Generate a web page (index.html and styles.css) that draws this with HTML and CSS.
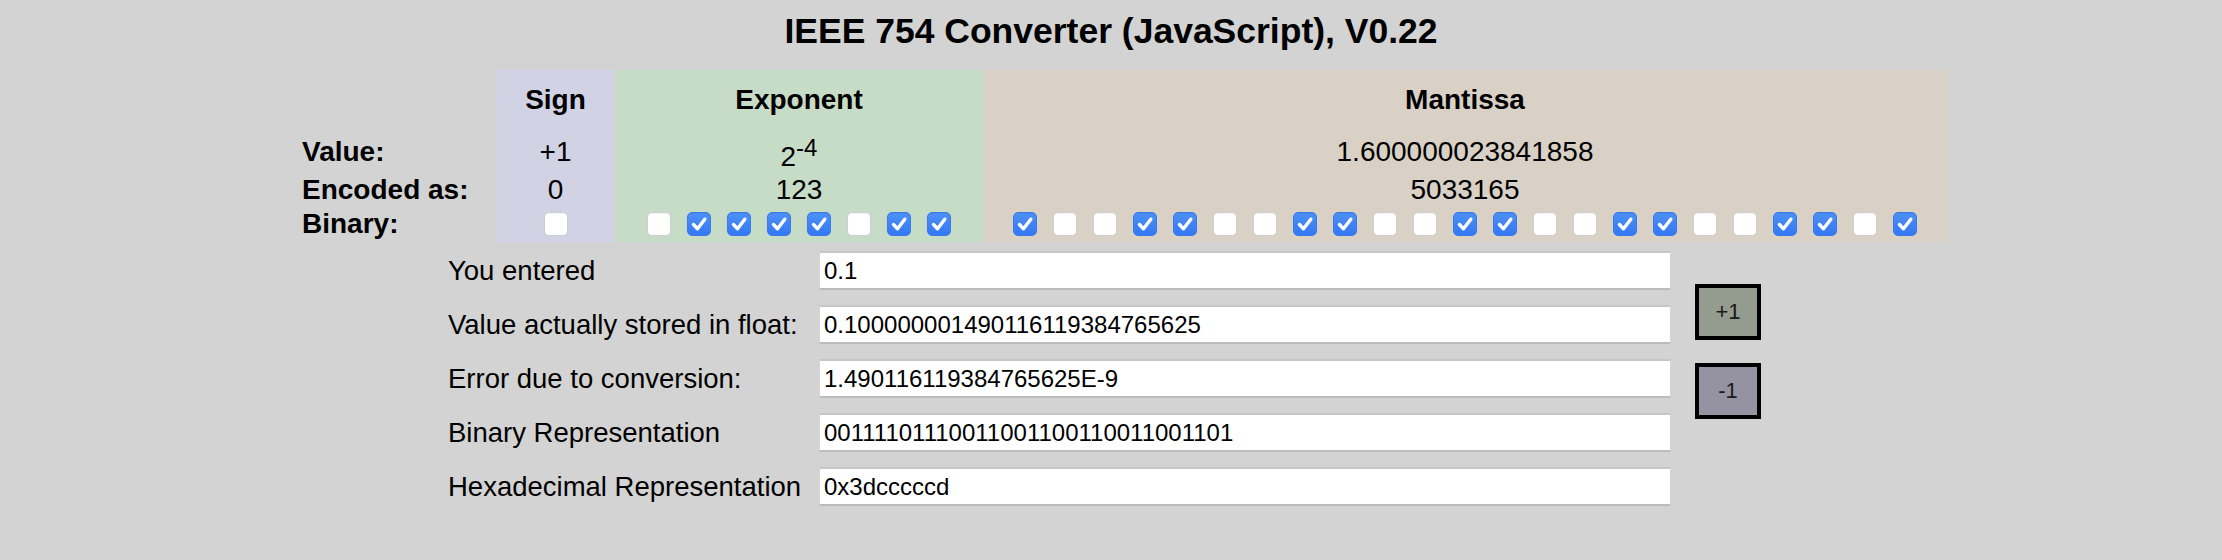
FILE: index.html
```html
<!DOCTYPE html>
<html>
<head>
<meta charset="utf-8">
<title>IEEE 754 Converter</title>
<link rel="stylesheet" href="styles.css">
</head>
<body>
<h1 class="title">IEEE 754 Converter (JavaScript), V0.22</h1>
<div class="bits">
  <div class="cell lab"></div>
  <div class="cell sign head">Sign</div>
  <div class="cell exp head">Exponent</div>
  <div class="cell man head">Mantissa</div>

  <div class="cell lab">Value:</div>
  <div class="cell sign">+1</div>
  <div class="cell exp pow"><span>2<sup>-4</sup></span></div>
  <div class="cell man">1.600000023841858</div>

  <div class="cell lab">Encoded as:</div>
  <div class="cell sign">0</div>
  <div class="cell exp">123</div>
  <div class="cell man">5033165</div>

  <div class="cell lab">Binary:</div>
  <div class="cell sign boxes">
    <span class="cb"></span>
  </div>
  <div class="cell exp boxes">
    <span class="cb"></span>
    <span class="cb on"><svg viewBox="0 0 24 24"><path d="M6.5 12.5 L10.5 16.8 L17.8 7.2"/></svg></span>
    <span class="cb on"><svg viewBox="0 0 24 24"><path d="M6.5 12.5 L10.5 16.8 L17.8 7.2"/></svg></span>
    <span class="cb on"><svg viewBox="0 0 24 24"><path d="M6.5 12.5 L10.5 16.8 L17.8 7.2"/></svg></span>
    <span class="cb on"><svg viewBox="0 0 24 24"><path d="M6.5 12.5 L10.5 16.8 L17.8 7.2"/></svg></span>
    <span class="cb"></span>
    <span class="cb on"><svg viewBox="0 0 24 24"><path d="M6.5 12.5 L10.5 16.8 L17.8 7.2"/></svg></span>
    <span class="cb on"><svg viewBox="0 0 24 24"><path d="M6.5 12.5 L10.5 16.8 L17.8 7.2"/></svg></span>
  </div>
  <div class="cell man boxes">
    <span class="cb on"><svg viewBox="0 0 24 24"><path d="M6.5 12.5 L10.5 16.8 L17.8 7.2"/></svg></span>
    <span class="cb"></span>
    <span class="cb"></span>
    <span class="cb on"><svg viewBox="0 0 24 24"><path d="M6.5 12.5 L10.5 16.8 L17.8 7.2"/></svg></span>
    <span class="cb on"><svg viewBox="0 0 24 24"><path d="M6.5 12.5 L10.5 16.8 L17.8 7.2"/></svg></span>
    <span class="cb"></span>
    <span class="cb"></span>
    <span class="cb on"><svg viewBox="0 0 24 24"><path d="M6.5 12.5 L10.5 16.8 L17.8 7.2"/></svg></span>
    <span class="cb on"><svg viewBox="0 0 24 24"><path d="M6.5 12.5 L10.5 16.8 L17.8 7.2"/></svg></span>
    <span class="cb"></span>
    <span class="cb"></span>
    <span class="cb on"><svg viewBox="0 0 24 24"><path d="M6.5 12.5 L10.5 16.8 L17.8 7.2"/></svg></span>
    <span class="cb on"><svg viewBox="0 0 24 24"><path d="M6.5 12.5 L10.5 16.8 L17.8 7.2"/></svg></span>
    <span class="cb"></span>
    <span class="cb"></span>
    <span class="cb on"><svg viewBox="0 0 24 24"><path d="M6.5 12.5 L10.5 16.8 L17.8 7.2"/></svg></span>
    <span class="cb on"><svg viewBox="0 0 24 24"><path d="M6.5 12.5 L10.5 16.8 L17.8 7.2"/></svg></span>
    <span class="cb"></span>
    <span class="cb"></span>
    <span class="cb on"><svg viewBox="0 0 24 24"><path d="M6.5 12.5 L10.5 16.8 L17.8 7.2"/></svg></span>
    <span class="cb on"><svg viewBox="0 0 24 24"><path d="M6.5 12.5 L10.5 16.8 L17.8 7.2"/></svg></span>
    <span class="cb"></span>
    <span class="cb on"><svg viewBox="0 0 24 24"><path d="M6.5 12.5 L10.5 16.8 L17.8 7.2"/></svg></span>
  </div>
</div>

<div class="form">
  <div class="fields">
    <div class="row"><label class="flabel">You entered</label><input class="field" type="text" value="0.1"></div>
    <div class="row"><label class="flabel">Value actually stored in float:</label><input class="field" type="text" value="0.100000001490116119384765625"></div>
    <div class="row"><label class="flabel">Error due to conversion:</label><input class="field" type="text" value="1.490116119384765625E-9"></div>
    <div class="row"><label class="flabel">Binary Representation</label><input class="field" type="text" value="00111101110011001100110011001101"></div>
    <div class="row"><label class="flabel">Hexadecimal Representation</label><input class="field" type="text" value="0x3dcccccd"></div>
  </div>
  <div class="btns">
    <button class="btn plus" type="button">+1</button>
    <button class="btn minus" type="button">-1</button>
  </div>
</div>
</body>
</html>
```

FILE: styles.css
```css
html, body {
  margin: 0;
  padding: 0;
  background: #d3d3d3;
  font-family: "Liberation Sans", Arial, Helvetica, sans-serif;
  color: #000;
}

.title {
  margin: 11px 0 0;
  font-size: 35.5px;
  line-height: 40px;
  font-weight: bold;
  text-align: center;
}

.bits {
  display: grid;
  grid-template-columns: 194px 119px 368px 964px;
  grid-template-rows: 60px 44px 32px 36px;
  margin: 19px 0 0 302px;
  width: max-content;
  font-size: 28px;
  line-height: 32px;
}

.cell {
  display: flex;
  align-items: center;
  justify-content: center;
  white-space: nowrap;
}

.cell.lab {
  justify-content: flex-start;
  font-weight: bold;
}

.cell.head {
  font-weight: bold;
}

.sign { background: #d1d2e4; }
.exp  { background: #c6dcc6; }
.man  { background: #d9d0c6; }

.pow {
  padding-top: 10px;
}

.pow sup {
  font-size: 24px;
  line-height: 0;
}

.boxes {
  gap: 16px;
}

.cb {
  box-sizing: border-box;
  width: 24px;
  height: 24px;
  border-radius: 5px;
  background: #fff;
  border: 1px solid #cfcfcf;
  box-shadow: inset 0 1px 1px rgba(0,0,0,0.04);
  display: flex;
  align-items: center;
  justify-content: center;
}

.cb.on {
  background: linear-gradient(#4c91f7, #3478f6);
  border: 1px solid #3a7ae8;
}

.cb svg {
  width: 24px;
  height: 24px;
  flex: none;
  fill: none;
  stroke: #fff;
  stroke-width: 3.4;
  stroke-linecap: round;
  stroke-linejoin: round;
}

.form {
  display: flex;
  gap: 24px;
  margin: 9px 0 0 448px;
}

.fields {
  display: flex;
  flex-direction: column;
  gap: 15px;
}

.row {
  display: flex;
  align-items: center;
  height: 39px;
}

.flabel {
  width: 371px;
  font-size: 27.5px;
  line-height: 32px;
  white-space: nowrap;
}

.field {
  box-sizing: border-box;
  width: 852px;
  height: 39px;
  margin: 0;
  padding: 0 4px;
  font-family: "Liberation Sans", Arial, Helvetica, sans-serif;
  font-size: 24px;
  color: #000;
  background: #fff;
  border: 1px solid #d6d6d6;
  border-top: 2px solid #c6c6c6;
  border-bottom: 2px solid #bcbcbc;
  outline: none;
}

.btns {
  display: flex;
  flex-direction: column;
  gap: 23px;
  padding-top: 33px;
}

.btn {
  box-sizing: border-box;
  width: 66px;
  height: 56px;
  margin: 0;
  padding: 0;
  border: 4px solid #000;
  border-radius: 0;
  font-family: "Liberation Sans", Arial, Helvetica, sans-serif;
  font-size: 22px;
  color: #1a1a1a;
}

.plus  { background: #939c8e; }
.minus { background: #9593a2; }
```
